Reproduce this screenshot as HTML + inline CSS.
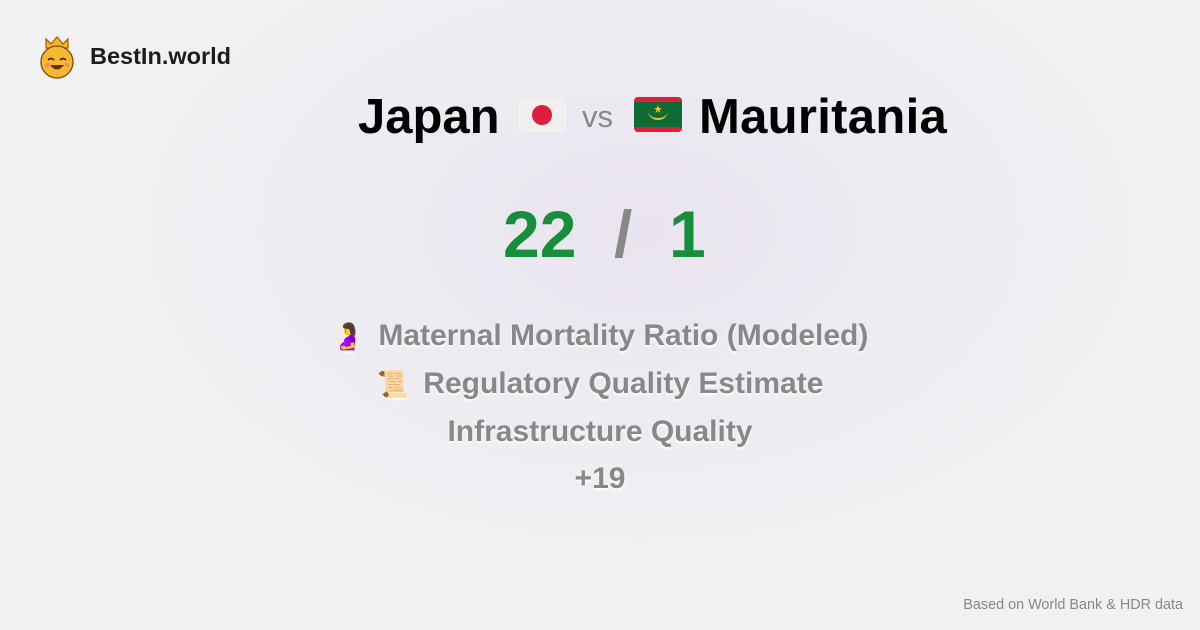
<!DOCTYPE html>
<html><head><meta charset="utf-8"><style>
*{margin:0;padding:0;box-sizing:border-box}
body{width:1200px;height:630px;overflow:hidden;font-family:"Liberation Sans",sans-serif;position:relative;
background:radial-gradient(ellipse 520px 330px at 640px 230px,#e9e4ef 0%,#eeebf2 55%,#f1f1f3 100%);}
.a{position:absolute}
.logo{left:90px;top:43px;font-size:23.5px;font-weight:bold;color:#1c1c1c}
.t{font-weight:bold;font-size:49px;color:#000;top:89px}
.vs{left:582px;top:99px;font-size:31px;color:#888}
.n{top:196px;font-size:66px;font-weight:bold;color:#178e3b}
.l{left:0;width:1200px;text-align:center;font-size:30px;font-weight:bold;color:#888;text-shadow:0 2px 2px #fff}
.l span{font-size:26px;margin-right:6px}
.f{right:17px;top:597px;font-size:14.4px;color:#888}
</style></head><body>
<svg class="a" style="left:38px;top:34px" width="38" height="46" viewBox="0 0 38 46">
<path d="M8 14 L8 5 L13 10 L19 3 L25 10 L30 5 L30 14 Z" fill="#f5b622" stroke="#a8650a" stroke-width="1.3"/>
<circle cx="19" cy="28" r="16" fill="#f7b731" stroke="#7a4a0a" stroke-width="1.3"/>
<path d="M10 26 q3 -3 6 0 M22 26 q3 -3 6 0" stroke="#3a2200" stroke-width="1.6" fill="none"/>
<path d="M12 31 q7 9 14 0 z" fill="#6b2b10"/>
<circle cx="9" cy="31" r="2" fill="#f08a6a"/><circle cx="29" cy="31" r="2" fill="#f08a6a"/>
</svg>
<div class="a logo">BestIn.world</div>
<div class="a t" style="left:358px">Japan</div>
<div class="a" style="left:518px;top:98px;width:48px;height:34px;background:#f1f0f0;border-radius:4px"><div style="position:absolute;left:14px;top:7px;width:20px;height:20px;border-radius:50%;background:#db1f3c"></div></div>
<div class="a vs">vs</div>
<svg class="a" style="left:634px;top:97px" width="48" height="35" viewBox="0 0 48 35">
<rect width="48" height="35" rx="4" fill="#db1f3c"/><rect y="5" width="48" height="25" fill="#0f6b35"/>
<path d="M14 14 a10 9 0 0 0 20 0 a10 7 0 0 1 -20 0z" fill="#f6bf1c"/>
<polygon points="24,8 25,11 28,11 25.5,13 26.5,16 24,14 21.5,16 22.5,13 20,11 23,11" fill="#f6bf1c"/>
</svg>
<div class="a t" style="left:699px;letter-spacing:0.3px">Mauritania</div>
<div class="a n" style="left:503px">22</div>
<div class="a n" style="left:614px;color:#888">/</div>
<div class="a n" style="left:669px">1</div>
<div class="a l" style="top:319px"><span>🤰</span> Maternal Mortality Ratio (Modeled)</div>
<div class="a l" style="top:367px"><span>📜</span> Regulatory Quality Estimate</div>
<div class="a l" style="top:415px">Infrastructure Quality</div>
<div class="a l" style="top:462px">+19</div>
<div class="a f">Based on World Bank &amp; HDR data</div>
</body></html>
